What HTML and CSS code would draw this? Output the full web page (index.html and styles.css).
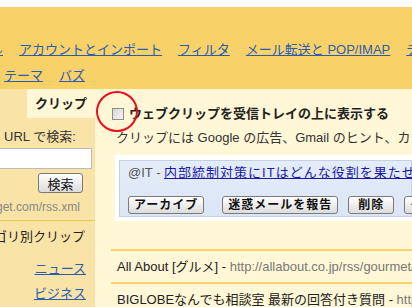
FILE: index.html
```html
<!DOCTYPE html>
<html lang="ja">
<head>
    <meta charset="utf-8">
    <title>設定 - ウェブクリップ</title>
    <meta name="viewport" content="width=device-width, initial-scale=1">
    <link rel="stylesheet" href="styles.css">
</head>
<body>
    <div class="topbar"></div>

    <div class="header">
        <div class="nav-row first">
            <a href="#">ラベル</a>
            <a href="#">アカウントとインポート</a>
            <a href="#">フィルタ</a>
            <a href="#">メール転送と POP/IMAP</a>
            <a href="#">チャット</a>
        </div>
        <div class="nav-row">
            <a href="#">テーマ</a>
            <a href="#">バズ</a>
        </div>
    </div>

    <div class="main">
        <div class="sidebar">
            <div class="tab-row">
                <div class="tab">クリップ</div>
            </div>
            <div class="label">URL で検索:</div>
            <input class="url-input" type="text">
            <button class="btn search-btn">検索</button>
            <div class="hint"><span>例: http://www.widget.com/rss.xml</span></div>
            <div class="divider"></div>
            <div class="cat-title"><span>カテゴリ別クリップ</span></div>
            <a class="cat-link" href="#">ニュース</a>
            <a class="cat-link" href="#">ビジネス</a>
        </div>

        <div class="content">
            <div class="marker"></div>
            <label class="show-row">
                <input type="checkbox" class="check">
                <span>ウェブクリップを受信トレイの上に表示する</span>
            </label>
            <div class="desc">クリップには Google の広告、Gmail のヒント、カスタマイズしたニュースやブログのフィードが表示されます。</div>

            <div class="preview">
                <div class="preview-box">
                    <div class="preview-title">@IT - <a href="#">内部統制対策にITはどんな役割を果たせるか</a></div>
                    <div class="preview-actions">
                        <button class="btn act archive">アーカイブ</button>
                        <button class="btn act">迷惑メールを報告</button>
                        <button class="btn act short">削除</button>
                        <button class="btn act">その他の操作</button>
                    </div>
                </div>
            </div>

            <div class="clip-list">
                <div class="clip-row">All About [グルメ] - <span class="clip-url">http://allabout.co.jp/rss/gourmet/index.rdf</span></div>
                <div class="clip-row">BIGLOBEなんでも相談室 最新の回答付き質問 - <span class="clip-url">http://soudan1.biglobe.ne.jp/rss</span></div>
            </div>
        </div>
    </div>
</body>
</html>
```

FILE: styles.css
```css
body {
    margin: 0;
    font-family: Arial, "Liberation Sans", "Noto Sans CJK JP", sans-serif;
    font-size: 13px;
    color: #222;
    background-color: #fff7d6;
    width: 412px;
    height: 307px;
    overflow: hidden;
}
a {
    color: #2a5db0;
}
.topbar {
    height: 7px;
    background-color: #fff;
}
.header {
    background-color: #f9d169;
    padding: 33px 0 3px 0;
    height: 46px;
}
.nav-row {
    display: flex;
    gap: 16px;
    white-space: nowrap;
    line-height: 20px;
    padding-left: 4px;
}
.nav-row.first {
    margin-left: -40px;
    margin-bottom: 6px;
}
.nav-row a {
    flex: none;
}
.main {
    display: flex;
    height: 218px;
}
.sidebar {
    width: 95px;
    flex: none;
    background-color: #fae3a6;
    overflow: hidden;
    white-space: nowrap;
}
.tab-row {
    height: 29px;
    display: flex;
    justify-content: flex-end;
}
.tab {
    width: 60px;
    padding-left: 8px;
    background-color: #fff7d6;
    font-weight: bold;
    line-height: 29px;
}
.label {
    margin-top: 9px;
    padding-left: 4px;
    line-height: 20px;
    color: #333;
}
.url-input {
    display: block;
    box-sizing: border-box;
    margin: 1px 0 0 -6px;
    width: 98px;
    height: 21px;
    border: 1px solid #bbb;
    background-color: #fff;
}
.btn {
    font-family: Arial, "Liberation Sans", "Noto Sans CJK JP", sans-serif;
    font-size: 13px;
    color: #111;
    background: linear-gradient(#ffffff, #dcdcdc);
    border: 1px solid #7a7a7a;
    border-radius: 3px;
    padding: 0;
    cursor: pointer;
}
.search-btn {
    display: block;
    margin: 4px 0 0 38px;
    width: 45px;
    height: 20px;
}
.hint {
    display: flex;
    justify-content: flex-end;
    margin-top: 7px;
    padding-right: 15px;
    font-size: 12px;
    line-height: 14px;
    color: #888;
}
.hint span, .cat-title span {
    flex: none;
}
.divider {
    margin-top: 6px;
    border-top: 1px solid #f5c842;
}
.cat-title {
    display: flex;
    justify-content: flex-end;
    margin-top: 6px;
    padding-right: 10px;
    line-height: 20px;
}
.cat-link {
    display: block;
    text-align: right;
    padding-right: 9px;
    line-height: 20px;
    margin-top: 12px;
}
.cat-link + .cat-link {
    margin-top: 5px;
}
.content {
    flex: 1;
    position: relative;
    overflow: hidden;
    white-space: nowrap;
}
.marker {
    position: absolute;
    left: 1px;
    top: 2px;
    width: 38px;
    height: 37px;
    border: 2px solid #e8101a;
    border-radius: 50%;
}
.show-row {
    display: flex;
    align-items: center;
    margin-top: 15px;
    padding-left: 17px;
    line-height: 20px;
    font-weight: bold;
}
.check {
    appearance: none;
    -webkit-appearance: none;
    margin: 0 5px 0 0;
    width: 12px;
    height: 12px;
    border: 1px solid #8d8d8d;
    background: linear-gradient(135deg, #d8d8d8, #f4f4f4);
    box-sizing: border-box;
}
.desc {
    margin-top: 4px;
    padding-left: 21px;
    line-height: 20px;
    color: #333;
}
.preview {
    margin: 7px 0 0 20px;
    padding: 5px 0 4px 4px;
    background-color: #fff;
}
.preview-box {
    border: 1px solid #c3d0e8;
    background: linear-gradient(#e4ecf8, #dbe5f5);
    padding: 2px 0 2px 8px;
}
.preview-title {
    line-height: 20px;
    color: #555;
}
.preview-title a {
    color: #1a1aa6;
    letter-spacing: 1px;
}
.preview-actions {
    display: flex;
    gap: 10px;
    margin-top: 13px;
}
.act {
    flex: none;
    height: 18px;
    padding: 0 5px;
    font-size: 12px;
    font-weight: bold;
    letter-spacing: 1px;
    line-height: 16px;
}
.act.short {
    padding: 0 9px;
}
.archive {
    margin-right: 8px;
}
.clip-list {
    margin: 28px 0 0 16px;
}
.clip-row {
    border-top: 2px solid #f9d169;
    line-height: 31px;
    padding-left: 6px;
}
.clip-url {
    color: #777;
}
```
